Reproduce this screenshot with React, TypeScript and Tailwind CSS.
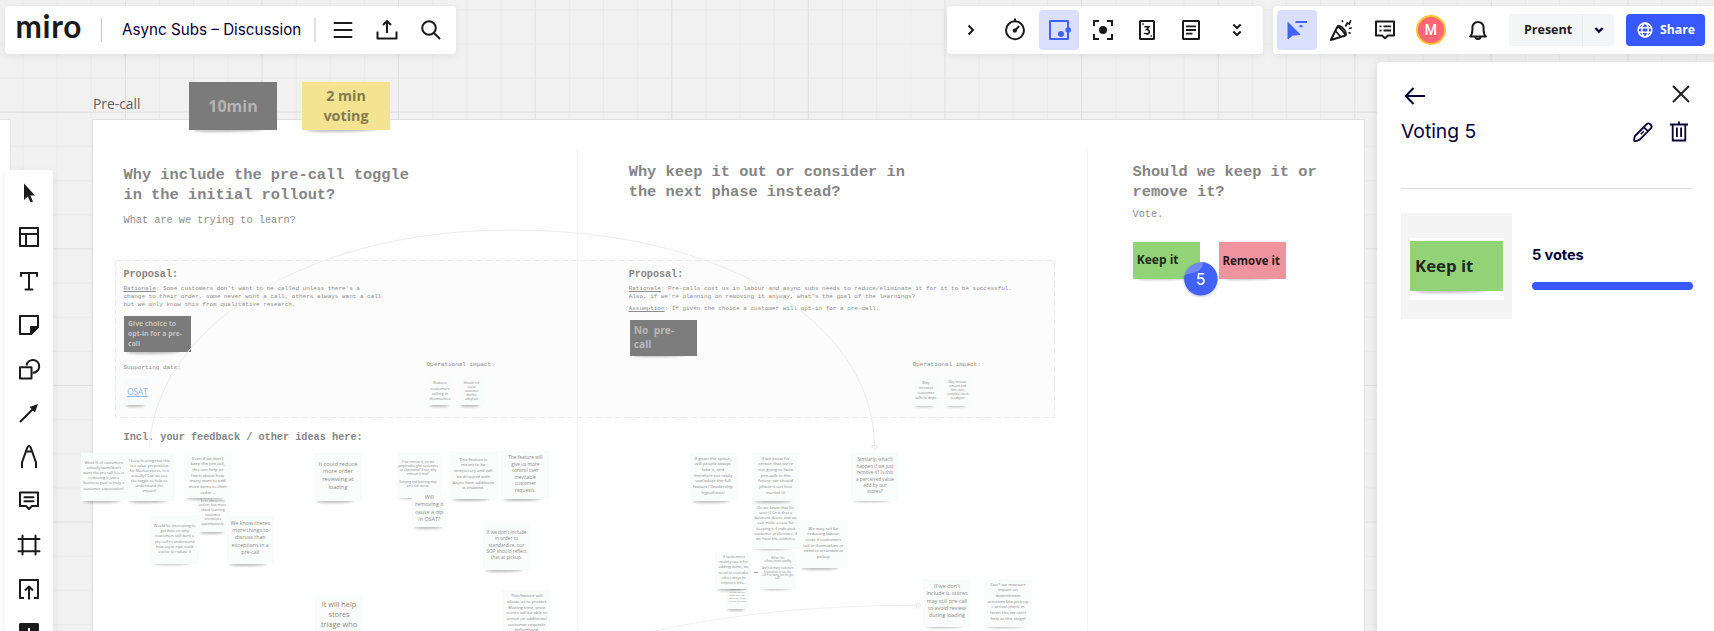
import React from "react";

type Note = {
  x: number;
  y: number;
  w: number;
  h: number;
  cx: number;
  first: number;
  pitch: number;
  lines: string[];
};

const NOTES: Note[] = [
  { x: 81, y: 452.5, w: 47, h: 48.5, cx: 103.7, first: 463, pitch: 5.1, lines: ["What % of customers", "actually want/don't", "want the pre call (i.e. is", "removing it just a", "business goal vs truly a", "customer expectation)"] },
  { x: 127.5, y: 452.5, w: 47, h: 48.5, cx: 149.3, first: 460.7, pitch: 5.07, lines: ["I keep hearing that this", "is a value proposition", "for Market stores. Is it", "actually? Can we use", "the toggle to help us", "understand the", "impact?"] },
  { x: 197.3, y: 497, w: 33, h: 35, cx: 212.7, first: 501.3, pitch: 4.67, lines: ["Less about the", "action, but more", "about learning", "customer", "intentions", "quantitatively"] },
  { x: 184.3, y: 452, w: 47.5, h: 46, cx: 207.7, first: 459, pitch: 5.67, lines: ["Even if we don't", "keep the pre call,", "this can help us", "learn about how", "many want to add", "more items to their", "order..."] },
  { x: 151, y: 515, w: 47.5, h: 48.5, cx: 174.7, first: 526.3, pitch: 5.07, lines: ["Would be interesting to", "get data on why", "customers still want a", "pre-call to understand", "how async rqst could", "evolve to reduce it"] },
  { x: 227.3, y: 515, w: 47, h: 49, cx: 250.3, first: 524, pitch: 7.2, lines: ["We know theres", "more things to", "discuss than", "exceptions in a", "pre-call"] },
  { x: 314.3, y: 453, w: 47.5, h: 48, cx: 338, first: 465, pitch: 7.6, lines: ["It could reduce", "more order", "reviewing at", "loading"] },
  { x: 315.3, y: 596, w: 48, h: 48, cx: 339, first: 604.3, pitch: 10, lines: ["It will help", "stores", "triage who"] },
  { x: 396.7, y: 452.7, w: 44, h: 45, cx: 418, first: 462, pitch: 4.07, lines: ["If we remove it, are we", "prepared to give customers", "an alternative? If not, why", "remove it now?", "\u00a0", "Keeping and learning may", "be a risk worse."] },
  { x: 412.3, y: 492, w: 35, h: 35, cx: 429.3, first: 498, pitch: 7.35, lines: ["Will", "removing it", "cause a dip", "in OSAT?"] },
  { x: 450, y: 450.5, w: 48, h: 48.5, cx: 473.3, first: 460, pitch: 5.73, lines: ["This feature is", "meant to be", "temporary and will", "be dropped with", "Async item additions", "is enabled."] },
  { x: 501, y: 450.5, w: 48, h: 48.5, cx: 525.3, first: 458, pitch: 6.47, lines: ["The feature will", "give us more", "control over", "inevitable", "customer", "requests."] },
  { x: 483, y: 522, w: 47.5, h: 48, cx: 506.5, first: 532.3, pitch: 6.4, lines: ["If we don't include", "in order to", "standardize, our", "SOP should reflect", "that at pickup."] },
  { x: 502, y: 590, w: 48, h: 48, cx: 526.7, first: 596.5, pitch: 5.67, lines: ["This feature will", "allows us to protect", "Waiting time, since", "stores will be able to", "action on additional", "customer requests", "beforehand"] },
  { x: 690, y: 452.5, w: 47, h: 48.5, cx: 713, first: 459, pitch: 5.67, lines: ["If given the option,", "will people always", "take it, and", "therefore not really", "use/adopt the full", "feature? (leadership", "hypothesis)"] },
  { x: 752, y: 500, w: 47.5, h: 48.5, cx: 775.7, first: 507.7, pitch: 5.2, lines: ["Do we know that for", "sure^? Or is that a", "business desire and we", "can make a case for", "keeping it if indicated", "customer preference, if", "we have the evidence"] },
  { x: 752, y: 452.5, w: 48, h: 48.5, cx: 775.7, first: 459, pitch: 5.67, lines: ["If we know for", "certain that we're", "not going to have", "pre-calls in the", "future, we should", "phase it out (not", "market it)"] },
  { x: 851, y: 452.5, w: 48, h: 48, cx: 875, first: 460, pitch: 6.37, lines: ["Similarly, what'll", "happen if we just", "remove it? Is this", "a perceived value", "add by our", "stores?"] },
  { x: 799.5, y: 519.5, w: 48, h: 48.5, cx: 823.3, first: 529, pitch: 5.67, lines: ["We may not be", "reducing labour", "costs if customers", "call in themselves or", "need to scramble at", "pickup"] },
  { x: 726, y: 586, w: 23, h: 23, cx: 737.3, first: 590, pitch: 3.1, lines: ["If customer the", "review call but", "same way they", "mark the future", "redline this out?"] },
  { x: 715.3, y: 551.5, w: 35.5, h: 37.5, cx: 733.7, first: 557.3, pitch: 5.07, lines: ["If customers", "mainly use it for", "adding items, we", "need to consider", "other ways to", "improve this..."] },
  { x: 760.3, y: 552, w: 36, h: 36.5, cx: 777.7, first: 559, pitch: 3.4, lines: ["Will we hot", "enhancement standby", "\u00a0", "And how many customers", "know about or use this", "call if so many, not the pre", "call?"] },
  { x: 922.7, y: 578.7, w: 48.5, h: 48, cx: 947, first: 587, pitch: 7.3, lines: ["If we don't", "include it, stores", "may still pre-call", "to avoid review", "during loading"] },
  { x: 983.7, y: 578.7, w: 48.3, h: 48, cx: 1008, first: 585, pitch: 5.67, lines: ["Can* we measure", "impact on", "downstream", "activities like pick up", "r arrival check in", "(even tho we can't", "help at this stage)"] },
  { x: 428.3, y: 378, w: 25.5, h: 27, cx: 440, first: 383.3, pitch: 5.2, lines: ["Reduce", "customers", "calling in", "themselves"] },
  { x: 459, y: 378, w: 25.5, h: 27, cx: 471.5, first: 383, pitch: 4.1, lines: ["Should not", "cause", "customer", "decline", "adoption"] },
  { x: 913.3, y: 378.5, w: 26, h: 27, cx: 926, first: 384, pitch: 4.9, lines: ["May", "increase", "customer", "calls to dept."] },
  { x: 945, y: 378.5, w: 26, h: 27, cx: 957.7, first: 383.5, pitch: 3.9, lines: ["May increase", "amount and", "time store", "complete check", "to adopter"] },
];

function NoteShadow() {
  return (
    <div className="absolute -bottom-[1.5px] left-[4%] h-[4px] w-[80%] -rotate-1 rounded-[50%] bg-black/25 blur-[1.3px]" />
  );
}

function PaleNote({ n }: { n: Note }) {
  const fontSize = n.pitch / (n.pitch > 6 ? 1.36 : 1.32);
  return (
    <div className="absolute" style={{ left: n.x, top: n.y, width: n.w, height: n.h }}>
      <NoteShadow />
      <div className="absolute inset-0 bg-[#fafbfb]" />
      <div
        className="absolute -translate-x-1/2 text-center font-['Open_Sans','Noto_Sans',sans-serif] whitespace-nowrap text-[#8a8a8a]"
        style={{ left: n.cx - n.x, top: n.first - n.pitch / 2 - n.y - 0.4, fontSize, lineHeight: n.pitch + "px" }}
      >
        {n.lines.map((l, i) => (
          <div key={i}>{l}</div>
        ))}
      </div>
    </div>
  );
}

function Mono({ x, y, size, pitch, bold, lines }: { x: number; y: number; size: number; pitch: number; bold?: boolean; lines: React.ReactNode[] }) {
  return (
    <div
      className={
        "absolute whitespace-pre font-['Liberation_Mono',monospace] " +
        (bold ? "font-bold text-[#858585]" : "text-[#8c8c8c]")
      }
      style={{ left: x, top: y - pitch / 2, fontSize: size, lineHeight: pitch + "px" }}
    >
      {lines.map((l, i) => (
        <div key={i}>{l}</div>
      ))}
    </div>
  );
}

function Labelled({ label, rest }: { label: string; rest: string }) {
  return (
    <div className="flex">
      <div className="underline">{label}</div>
      <div>{rest}</div>
    </div>
  );
}

function Sticky({ x, y, w, h, tone, children }: { x: number; y: number; w: number; h: number; tone: string; children: React.ReactNode }) {
  return (
    <div className="absolute" style={{ left: x, top: y, width: w, height: h }}>
      <NoteShadow />
      <div className={"absolute inset-0 flex flex-col justify-center font-['Open_Sans','Noto_Sans',sans-serif] whitespace-pre " + tone}>{children}</div>
    </div>
  );
}

function Grid() {
  const step = 34.15;
  const cols = Array.from({ length: 51 }, (_, i) => i);
  const rows = Array.from({ length: 19 }, (_, i) => i);
  return (
    <svg className="absolute inset-0" width="1714" height="631">
      {cols.map((i) => (
        <line key={"c" + i} x1={22.9 + i * step} x2={22.9 + i * step} y1="0" y2="631" stroke={i % 4 === 3 ? "#dfdfdf" : "#eaeaea"} strokeWidth="1" />
      ))}
      {rows.map((i) => (
        <line key={"r" + i} y1={9.8 + i * step} y2={9.8 + i * step} x1="0" x2="1714" stroke={i % 4 === 3 ? "#dfdfdf" : "#eaeaea"} strokeWidth="1" />
      ))}
    </svg>
  );
}

function Icon({ children, size = 24, className = "text-[#1a1a1a]", sw = 2 }: { children: React.ReactNode; size?: number; className?: string; sw?: number }) {
  return (
    <svg width={size} height={size} viewBox="0 0 24 24" fill="none" stroke="currentColor" strokeWidth={sw} className={"shrink-0 " + className}>
      {children}
    </svg>
  );
}

function Slot({ w = "w-11", active, children }: { w?: string; active?: boolean; children: React.ReactNode }) {
  return (
    <div className={"flex h-12 shrink-0 items-center justify-center " + w}>
      <div className={"flex size-10 items-center justify-center rounded-[4px] " + (active ? "bg-[#d9dffc]" : "")}>{children}</div>
    </div>
  );
}

function Canvas() {
  return (
    <div className="absolute inset-0 overflow-hidden bg-[#f1f1f1]">
      <Grid />
      <div className="absolute top-[119px] -left-2 h-[520px] w-[19px] border border-[#e3e3e3] bg-white" />
      <div className="absolute top-[119px] left-[92px] h-[520px] w-[1273px] border border-[#e0e0e0] bg-white" />
      <div className="absolute top-[93.500px] left-[93px] font-['Open_Sans','Noto_Sans',sans-serif] text-[13.800px] leading-[20px] text-[#606060]">Pre-call</div>

      <svg className="absolute inset-0" width="1714" height="631" fill="none">
        <rect x="115.5" y="260.5" width="939" height="157" fill="#fcfcfc" stroke="#ebebeb" strokeDasharray="6 3.5" />
        <path d="M577.5 150V631M1087.5 150V631" stroke="#f3f3f3" strokeWidth="1" />
      </svg>

      {NOTES.map((n, i) => (
        <PaleNote key={i} n={n} />
      ))}
      <div className="absolute top-[379px] left-[124px] h-[26px] w-[25px]">
        <NoteShadow />
        <div className="absolute inset-0 flex items-center justify-center bg-[#f9fafb] pl-[2px] font-['Open_Sans',sans-serif] text-[8.2px] text-[#8fb2ee] underline">OSAT</div>
      </div>
      <div className="absolute top-[571.5px] left-[754px] h-[1.2px] w-[4px] bg-[#999]" />

      <Mono x={123.5} y={174.9} size={15.35} pitch={20.4} bold lines={["Why include the pre-call toggle", "in the initial rollout?"]} />
      <Mono x={628.7} y={171.8} size={15.35} pitch={20.4} bold lines={["Why keep it out or consider in", "the next phase instead?"]} />
      <Mono x={1132.5} y={171.8} size={15.35} pitch={20.4} bold lines={["Should we keep it or", "remove it?"]} />
      <Mono x={123.5} y={220} size={10.25} pitch={14} lines={["What are we trying to learn?"]} />
      <Mono x={1132.5} y={214} size={10.25} pitch={14} lines={["Vote."]} />
      <Mono x={123.5} y={274.6} size={10.1} pitch={13} bold lines={["Proposal:"]} />
      <Mono x={628.7} y={274.6} size={10.1} pitch={13} bold lines={["Proposal:"]} />
      <Mono
        x={123.5}
        y={289}
        size={5.97}
        pitch={8.3}
        lines={[
          <Labelled label="Rationale" rest=": Some customers don't want to be called unless there's a" />,
          "change to their order, some never want a call, others always want a call",
          "but we only know this from qualitative research.",
        ]}
      />
      <Mono
        x={628.7}
        y={289}
        size={5.97}
        pitch={8.3}
        lines={[
          <Labelled label="Rationale" rest=": Pre-calls cost us in labour and async subs needs to reduce/eliminate it for it to be successful." />,
          "Also, if we're planning on removing it anyway, what's the goal of the learnings?",
        ]}
      />
      <Mono x={628.7} y={309.3} size={5.97} pitch={8.3} lines={[<Labelled label="Assumption" rest=": If given the choice a customer will opt-in for a pre-call." />]} />
      <Mono x={123.5} y={368} size={5.97} pitch={8.3} lines={["Supporting data:"]} />
      <Mono x={426.5} y={365.6} size={5.97} pitch={8.3} lines={["Operational impact:"]} />
      <Mono x={912.7} y={365.6} size={5.97} pitch={8.3} lines={["Operational impact:"]} />
      <Mono x={123.5} y={437} size={10.22} pitch={14} bold lines={["Incl. your feedback / other ideas here:"]} />

      <Sticky x={189} y={82} w={88} h={48} tone="items-center bg-[#7b7b7b] text-[16px] leading-[20px] font-bold text-[#b4b4b4]">10min</Sticky>
      <Sticky x={302} y={82} w={88} h={48} tone="items-center bg-[#f4e390] text-center text-[14.3px] leading-[19.8px] font-bold text-[#857b4e]">{"2 min\nvoting"}</Sticky>
      <Sticky x={124.3} y={316} w={66.7} h={36} tone="bg-[#7b7b7b] pl-[3.8px] text-[6.900px] leading-[10px] font-bold text-[#c2c2c2]">{"Give choice to\nopt-in for a pre-\ncall"}</Sticky>
      <Sticky x={630.3} y={320} w={66.5} h={35.5} tone="bg-[#7d7d7d] pb-px pl-[3.5px] text-[10.200px] leading-[14.4px] font-bold text-[#b8b8b8]">{"No  pre-\ncall"}</Sticky>
      <Sticky x={1133.3} y={242.3} w={67} h={36.4} tone="bg-[#92d378] pl-[3.5px] text-[12px] font-bold text-[#1d2a18]">Keep it</Sticky>
      <Sticky x={1219.4} y={242.3} w={66.8} h={36.4} tone="bg-[#ef949f] pl-[3px] text-[11.5px] font-bold text-[#2a1719]">Remove it</Sticky>

      <svg className="absolute inset-0" width="1714" height="631" fill="none">
        <path d="M149.5 447C156 330 300 230 511 230S872 320 874.5 445" stroke="#ececec" strokeWidth="1" />
        <path d="M871.5 445.5h6l-3 4.5z" stroke="#e8e8e8" />
        <path d="M650 632Q770 605 917 605.3" stroke="#f0f0f0" />
        <path d="M916.500 602.500v6l4.500-3z" stroke="#e8e8e8" />
      </svg>

      <div className="absolute top-[262.300px] left-[1184px] size-[33.500px] drop-shadow-[0_1px_1.500px_rgba(0,0,0,0.25)]">
        <svg className="absolute inset-0" viewBox="0 0 34 34">
          <path d="M18.500.1A17 17 0 1 1 .5 13.500C4 12.500 14 7 18.500.1z" fill="#4262ff" />
          <path d="M18.500.1C20 3 18 7 14 9.500C9 12 3 11.500.5 13.500C3 6 9 .5 18.500.1z" fill="#7288f6" />
        </svg>
        <div className="absolute inset-0 flex items-center justify-center pt-[2px] font-['Inter',sans-serif] text-[15.500px] font-medium text-white">5</div>
      </div>
    </div>
  );
}

function BoardBar() {
  return (
    <header className="absolute top-[6px] left-[5px] flex h-12 w-[450.500px] items-center rounded-[4px] bg-white shadow-[0_2px_8px_rgba(0,0,0,0.07)]">
      <div className="w-[84px] pl-[10.500px] font-['Lato',sans-serif] text-[31.500px] leading-[44px] font-bold tracking-[0.700px] text-[#1a1a1a]">
        <div className="-mt-[8px]">miro</div>
      </div>
      <div className="ml-[12px] h-6 w-px bg-[#c9c9cd]" />
      <div className="ml-[20px] w-[192px] font-['Inter',sans-serif] text-[15.200px] whitespace-nowrap text-[#050038]">Async Subs – Discussion</div>
      <div className="h-6 w-[1.500px] bg-[#e0e0e4]" />
      <div className="ml-[5.500px] flex">
        <Slot><Icon><path d="M3.500 5h17M3.500 12h17M3.500 19h17" strokeLinecap="round" /></Icon></Slot>
        <Slot><Icon><path d="M2.500 13.500V20.500h19V13.500M12 15V3.500M8 7L12 3l4 4" strokeLinejoin="round" /></Icon></Slot>
        <Slot><Icon><circle cx="10" cy="10" r="6.800" /><path d="M15 15l6 6" /></Icon></Slot>
      </div>
    </header>
  );
}

function ToolsBar() {
  return (
    <div className="absolute top-[6px] left-[947px] flex h-12 w-[316px] items-center rounded-[4px] bg-white pl-[2px] shadow-[0_2px_8px_rgba(0,0,0,0.07)]">
      <Slot><Icon><path d="M9.500 7.500L14 12l-4.500 4.500" /></Icon></Slot>
      <Slot>
        <Icon><circle cx="12" cy="12.300" r="9" /><path d="M12 .5V3.500M12 12.300l4.200-4.200" /><circle cx="11.800" cy="12.600" r="1.200" fill="currentColor" /></Icon>
      </Slot>
      <Slot active>
        <Icon className="text-[#4262ff]"><path d="M21 9V3H3V21H21V15.500" strokeLinejoin="round" /><path d="M21 8v9" /><circle cx="21.200" cy="12" r="2.800" fill="currentColor" stroke="none" /><circle cx="14" cy="16" r="3" fill="currentColor" stroke="none" /></Icon>
      </Slot>
      <Slot>
        <Icon><path d="M3 8V3h5M16 3h5v5M21 16v5h-5M8 21H3v-5" /><circle cx="12" cy="12" r="4" fill="currentColor" stroke="none" /></Icon>
      </Slot>
      <Slot>
        <Icon><rect x="5" y="3" width="14" height="18" rx=".5" /><path d="M9.300 8.700H14L11.600 11.500C15.200 11.300 15 15.900 11.800 15.900Q10.200 15.900 9.300 15" strokeWidth="1.600" /><path d="M7.300 6h1.500M15.500 18h1.500" strokeWidth="1.300" /></Icon>
      </Slot>
      <Slot>
        <Icon><rect x="4" y="3" width="16" height="18" rx=".5" /><path d="M7 8.300h10M7 12h10M7 15.700h6.500" strokeWidth="1.800" /></Icon>
      </Slot>
      <Slot w="w-12"><Icon><path d="M8.300 6.500L12 10l3.700-3.500M8.300 13.500L12 17l3.700-3.500" /></Icon></Slot>
    </div>
  );
}

function ShareBar() {
  return (
    <div className="absolute top-[6px] left-[1272.500px] flex h-12 w-[450px] items-center rounded-l-[4px] bg-white pl-[2px] shadow-[0_2px_8px_rgba(0,0,0,0.07)]">
      <Slot active>
        <Icon className="text-[#4262ff]"><path d="M3 4.500V21l4.500-3.800L15 16.500z" fill="currentColor" stroke="currentColor" strokeWidth="1" strokeLinejoin="round" /><path d="M10.500 4h11.500M14.500 8.300h3" /></Icon>
      </Slot>
      <Slot>
        <Icon><path d="M1.800 22L8.500 8.500C11 9.500 15 13.500 16.500 17.500z" strokeLinejoin="round" /><path d="M8.500 8.500C11 5.500 19 14 16.500 17.500M6.500 13l5.500 6" strokeWidth="1.700" /><path d="M13 2.300l.8 1.800M16.500 8.500l1.800-3.500 2 1 1.500-3.700M19.800 10.500l3-.8M19.500 14.500l2.200.8" strokeWidth="1.700" /></Icon>
      </Slot>
      <Slot>
        <Icon><path d="M3 3.500h18v14h-6L12 20.300 9 17.500H3z" strokeLinejoin="round" /><path d="M6.500 8.300h2M10.500 8.300h7.500M6.500 12.500h2M10.500 12.500h7.500" strokeWidth="1.800" /></Icon>
      </Slot>
      <div className="ml-[9.500px] flex size-[29.500px] items-center justify-center rounded-full border-[2.500px] border-[#fac62d] bg-[#ff6575] font-['Roboto',sans-serif] text-[14px] font-medium text-white">M</div>
      <div className="ml-[10px]">
        <Slot><Icon><path d="M4 18.500h16C18 17 17.600 15 17.600 12V9.500a5.600 5.600 0 0 0-11.200 0V12C6.400 15 6 17 4 18.500z" strokeLinejoin="round" /><path d="M9.500 18.500a2.500 2.500 0 0 0 5 0" /></Icon></Slot>
      </div>
      <div className="ml-[9.500px] flex h-8 w-[105px] shrink-0 items-center rounded-[4px] bg-[#f4f5f7]">
        <div className="w-[73px] pl-[15px] font-['Open_Sans','Noto_Sans',sans-serif] text-[12.500px] font-bold text-[#1d1d24]">Present</div>
        <div className="h-full w-px bg-[#e9eaee]" />
        <div className="flex flex-1 justify-center"><Icon size={16} className="text-[#050038]" sw={3.400}><path d="M6.500 9L12 14.500 17.500 9" /></Icon></div>
      </div>
      <div className="ml-[12px] flex h-8 w-[79px] shrink-0 items-center rounded-[4px] bg-[#3859ff] pl-[11px] text-white">
        <Icon size={16} className="text-white" sw={2.300}><circle cx="12" cy="12" r="10.300" /><ellipse cx="12" cy="12" rx="4.800" ry="10.300" /><path d="M2 8.500h20M2 15.500h20" /></Icon>
        <div className="ml-[7px] font-['Open_Sans','Noto_Sans',sans-serif] text-[12.300px] font-bold">Share</div>
      </div>
    </div>
  );
}

const LEFT_ICONS: React.ReactNode[] = [
  <path key="p" d="M7 2.500V19L10.800 15.600 13.600 21.500 16 20.400 13.400 14.500H18z" fill="currentColor" stroke="none" />,
  <path key="p" d="M3 3h18v18H3zM3 9h18M9 9v12" strokeLinejoin="round" />,
  <path key="p" d="M4 7V4H20V7M12 4V20M8.500 20.500h7" strokeLinecap="round" />,
  <g key="p" strokeLinejoin="round"><path d="M3 3h18v11l-7 7H3z" /><path d="M21 14h-7v7z" fill="currentColor" /></g>,
  <g key="p" strokeLinejoin="round"><path d="M3 10.300h11.500V21.500H3z" /><path d="M9.500 8.500a6.400 6.400 0 1 1 6 7.200" /></g>,
  <g key="p"><path d="M3.500 20.500L17 7" strokeLinecap="round" /><path d="M21 3l-3 8.500-5.500-5.500z" fill="currentColor" stroke="none" /></g>,
  <path key="p" d="M5 23V17.500L10.300 2.500Q12 -.5 13.700 2.500L19 17.500V23M9.300 6.500h5.400" />,
  <g key="p"><path d="M3 3.500h18v13.500h-6L12 20 9 17H3z" strokeLinejoin="round" /><path d="M7.500 8.300h9M7.500 12.300h9" strokeLinecap="round" /></g>,
  <path key="p" d="M5.500 2.500v19M18.500 2.500v19M1.500 6h21M1.500 18.300h21" strokeLinecap="round" />,
  <path key="p" d="M7 21H3V3h18v18h-4M12 22.500V10M8 13.500L12 9.500l4 4" strokeLinejoin="round" />,
  <g key="p"><rect x="2" y="2" width="20" height="20" rx="1.500" fill="currentColor" stroke="none" /><path d="M12 7v10M7 12h10" stroke="white" /></g>,
];

function ToolRail() {
  return (
    <nav className="absolute top-[169.500px] left-[5px] flex h-[490px] w-12 flex-col items-center rounded-[4px] bg-white pt-[1.500px] shadow-[0_2px_8px_rgba(0,0,0,0.08)]">
      {LEFT_ICONS.map((icon, i) => (
        <div key={i} className="flex h-11 shrink-0 items-center"><Icon>{icon}</Icon></div>
      ))}
    </nav>
  );
}

function VotingPanel() {
  return (
    <aside className="absolute top-[62px] left-[1377px] flex h-[600px] w-[345px] flex-col rounded-tl-[5px] bg-white pr-[29px] pl-[24px] font-['Inter',sans-serif] text-[#050038] shadow-[0_2px_10px_rgba(0,0,0,0.12)]">
      <div className="flex h-[50px] items-start justify-between">
        <Icon className="mt-[22px] ml-[2px] text-[#050038]"><path d="M22 12H3M10.500 4L2.800 12l7.700 8" /></Icon>
        <Icon className="mt-[20px] text-[#222]"><path d="M4 4l16 16M20 4L4 20" /></Icon>
      </div>
      <div className="mt-[4px] flex h-[31px] items-center">
        <div className="flex-1 pb-px text-[19.300px] whitespace-nowrap">Voting 5</div>
        <Icon className="mr-[12px] text-[#050038]"><path d="M4 16L15.800 4Q17.500 2.500 19.500 4.500T20 8.200L8.500 19.800Q6.500 21.300 3.200 21 3 18 4 16zM12.800 7.200l4 4" strokeLinejoin="round" strokeWidth="1.800" /><path d="M9.800 14.200l3-3" strokeWidth="1.600" /></Icon>
        <Icon className="mr-[2px] text-[#050038]"><path d="M3 4.500h18M12 1.500v3M5.700 4.500V20.500h12.600V4.500M9.900 7.500v9.500M14.100 7.500v9.500" strokeWidth="1.800" /></Icon>
      </div>
      <div className="mt-[41px] h-px w-full shrink-0 bg-[#dcdce0]" />
      <div className="mt-[24px] flex h-[106px]">
        <div className="flex w-[111px] flex-col bg-[#f4f4f4] px-2 pt-[25px]">
          <div className="h-[62px] bg-white px-px pt-[2.500px]">
            <div className="relative h-[50.500px]">
              <NoteShadow />
              <div className="relative flex h-full items-center bg-[#92d378] pb-px pl-[5px] font-['Open_Sans','Noto_Sans',sans-serif] text-[16.800px] font-bold text-[#1d2a18]">Keep it</div>
            </div>
          </div>
        </div>
        <div className="ml-[20px] flex flex-1 flex-col pt-[31px]">
          <div className="text-[14.600px] leading-[22px] font-bold tracking-[-0.100px]">5 votes</div>
          <div className="mt-[16px] h-2 rounded-full bg-[#3859ff]" />
        </div>
      </div>
    </aside>
  );
}

export default function App() {
  return (
    <div className="relative h-[631px] w-[1714px] overflow-hidden">
      <Canvas />
      <ToolRail />
      <VotingPanel />
      <BoardBar />
      <ToolsBar />
      <ShareBar />
    </div>
  );
}
